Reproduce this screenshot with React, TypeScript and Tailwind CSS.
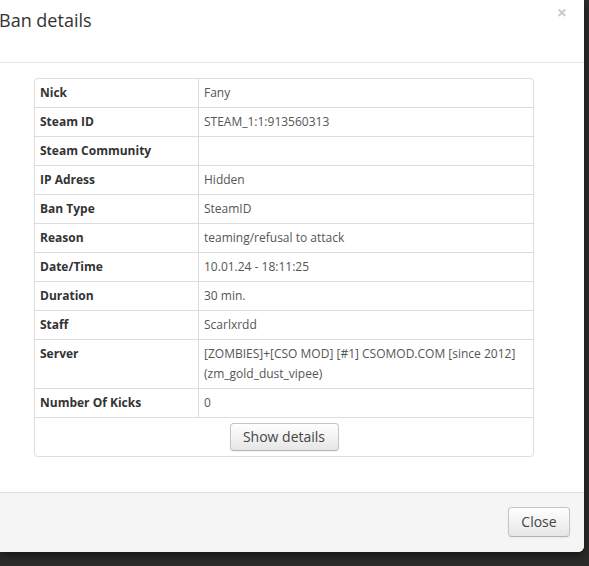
import React from 'react';

type Row = {
  label: string;
  value?: React.ReactNode;
};

const rows: Row[] = [
  { label: 'Nick', value: 'Fany' },
  { label: 'Steam ID', value: 'STEAM_1:1:913560313' },
  { label: 'Steam Community', value: '' },
  { label: 'IP Adress', value: 'Hidden' },
  { label: 'Ban Type', value: 'SteamID' },
  { label: 'Reason', value: 'teaming/refusal to attack' },
  { label: 'Date/Time', value: '10.01.24 - 18:11:25' },
  { label: 'Duration', value: '30 min.' },
  { label: 'Staff', value: 'Scarlxrdd' },
  {
    label: 'Server',
    value: (
      <>
        [ZOMBIES]+[CSO MOD] [#1] CSOMOD.COM [since 2012]
        <br />
        (zm_gold_dust_vipee)
      </>
    ),
  },
  { label: 'Number Of Kicks', value: '0' },
];

const btn =
  'bg-gradient-to-b from-white to-[#e6e6e6] border border-[#c5c5c5] border-b-[#b3b3b3] rounded-[4px] text-[14px] text-[#444] shadow-[inset_0_1px_0_rgba(255,255,255,0.2),0_1px_2px_rgba(0,0,0,0.05)]';

const App = () => {
  return (
    <div
      className="w-[589px] h-[566px] bg-[#2b2c29] overflow-hidden relative"
      style={{ fontFamily: '"Open Sans", "Liberation Sans", sans-serif' }}
    >
      <div className="w-[584px] h-[552px] bg-white rounded-br-[6px] flex flex-col overflow-hidden shadow-[0_3px_9px_rgba(0,0,0,0.5)]">
        {/* header */}
        <div className="h-[63px] border-b border-[#e5e5e5] relative shrink-0">
          <h3 className="pt-[7px] text-[18px] leading-[27px] text-[#333] -ml-[1px]">Ban details</h3>
          <span className="absolute top-[2px] right-[17px] text-[18px] font-bold text-black opacity-20 leading-[20px]">
            ×
          </span>
        </div>

        {/* body */}
        <div className="h-[429px] pt-[15px] shrink-0">
          <div className="ml-[34px] w-[500px] border border-[#ddd] rounded-[4px] text-[12px] leading-[20px]">
            {rows.map((row) => (
              <div key={row.label} className="flex border-b border-[#ddd]">
                <div className="w-[164px] shrink-0 border-r border-[#ddd] px-[5px] py-[4px] font-bold text-[#333]">
                  {row.label}
                </div>
                <div className="flex-1 px-[5px] py-[4px] text-[#555] min-h-[28px]">{row.value}</div>
              </div>
            ))}
            <div className="flex justify-center pt-[5px] pb-[5px]">
              <button className={`${btn} w-[109px] h-[28px] leading-[26px]`}>Show details</button>
            </div>
          </div>
        </div>

        {/* footer */}
        <div className="flex-1 bg-[#f5f5f5] border-t border-[#ddd] flex justify-end pt-[14px] pr-[14px]">
          <button className={`${btn} w-[62px] h-[30px] leading-[28px]`}>Close</button>
        </div>
      </div>
    </div>
  );
};

export default App;
